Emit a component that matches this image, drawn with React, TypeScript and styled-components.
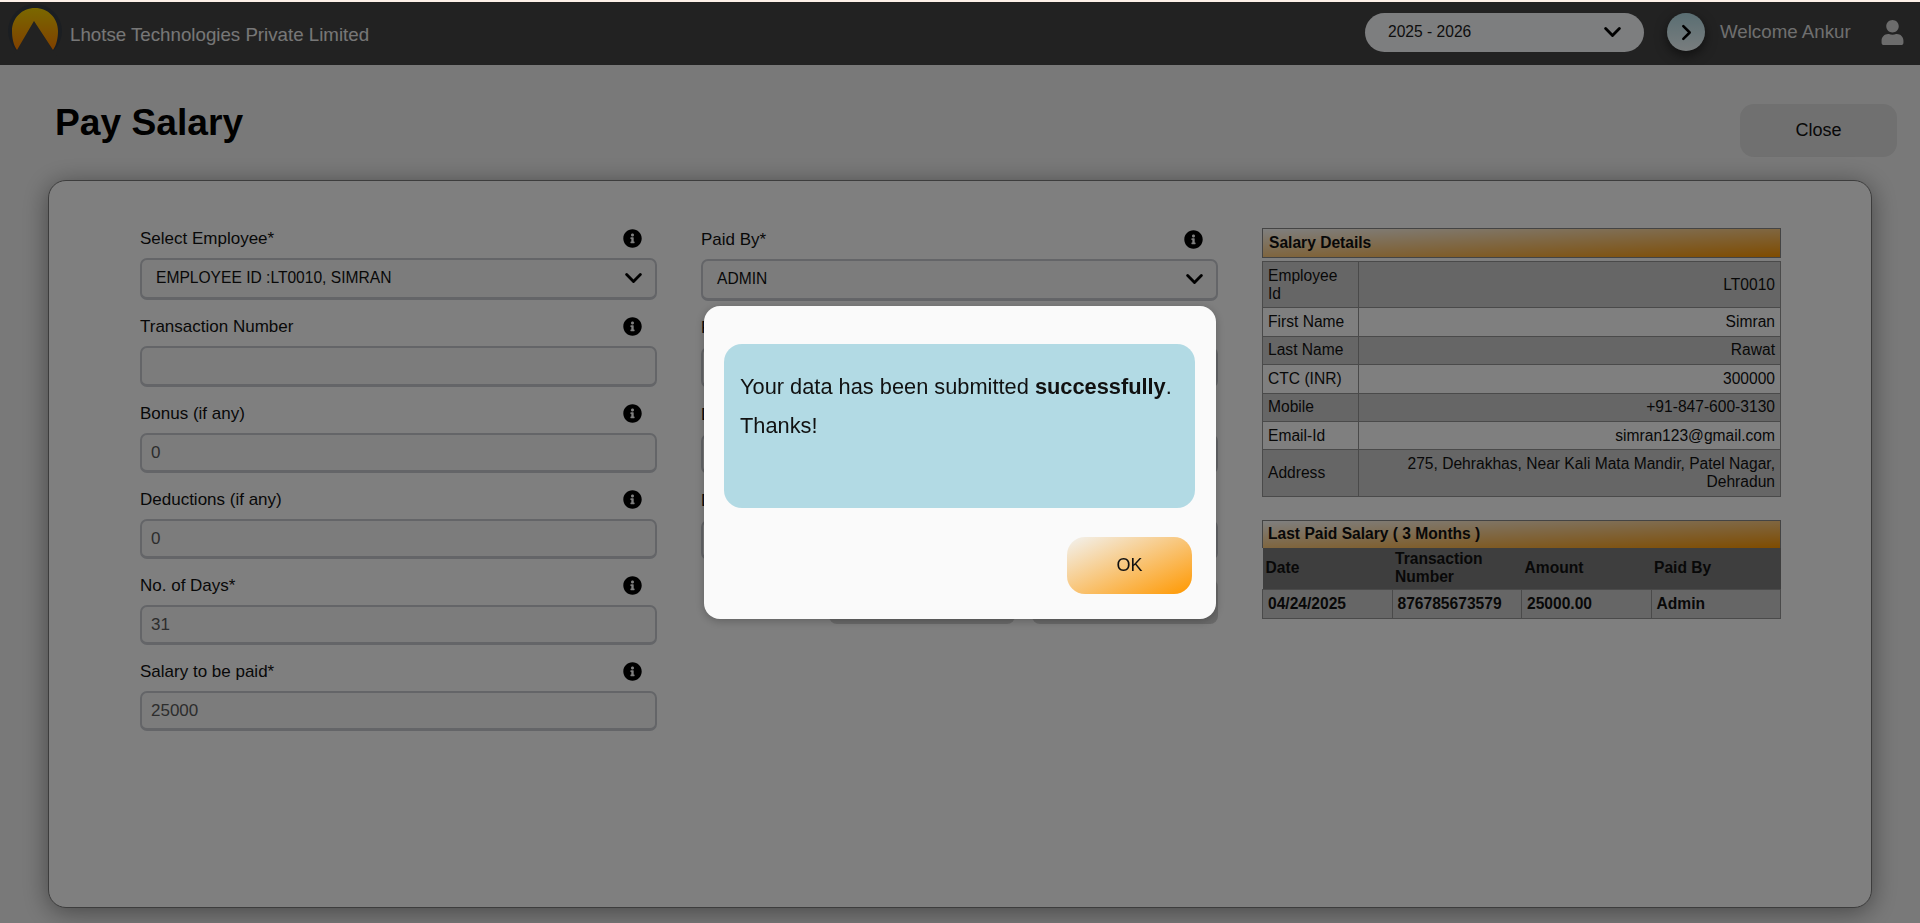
import React from 'react';
import styled, { createGlobalStyle } from 'styled-components';
import { FaInfoCircle, FaUser } from 'react-icons/fa';

const Global = createGlobalStyle`
  html, body { margin: 0; padding: 0; height: 100%; background: #fdf0e8; overflow: hidden; }
  body { font-family: "Liberation Sans", Arial, sans-serif; color: #000; }
  * { box-sizing: border-box; }
`;

const Shell = styled.div`
  padding-top: 2px;
  height: 923px;
  display: flex;
  flex-direction: column;
`;

const Header = styled.header`
  height: 63px;
  flex: none;
  background: #444;
  display: flex;
  align-items: center;
  padding: 0 15px 0 8px;
`;

const LogoMark = styled.svg`
  width: 54px;
  height: 54px;
  flex: none;
  margin-top: -6px;
`;

const Company = styled.div`
  margin-left: 8px;
  font-size: 18.72px;
  color: #eee;
  flex: 1;
  padding-top: 2px;
`;

const YearSelect = styled.div`
  width: 279px;
  height: 39px;
  margin-top: -3px;
  border-radius: 20px;
  background: #fafcff;
  display: flex;
  align-items: center;
  justify-content: space-between;
  padding: 0 23px 0 23px;
  font-size: 15.6px;
  color: #1a1a1a;
`;

const Toggle = styled.div`
  width: 38px;
  height: 38px;
  margin: -3px 15px 0 23px;
  border-radius: 50%;
  background: linear-gradient(180deg, #b4dde6, #f2fbfd);
  box-shadow: 0 4px 12px rgba(0, 0, 0, 0.55);
  display: flex;
  align-items: center;
  justify-content: center;
  flex: none;
`;

const Welcome = styled.div`
  font-size: 18.72px;
  color: #dedede;
  margin-top: -3px;
  width: 160px;
`;

const UserIcon = styled(FaUser)`
  color: #d8d8d8;
  font-size: 25px;
  margin-top: -2px;
  flex: none;
`;

const Main = styled.main`
  flex: 1;
  background: #f3f3f3;
  padding: 39px 23px 15px 48px;
  display: flex;
  flex-direction: column;
  min-height: 0;
`;

const TitleRow = styled.div`
  height: 76px;
  flex: none;
  display: flex;
  justify-content: space-between;
  align-items: flex-start;
  padding-left: 7px;
`;

const Title = styled.h1`
  margin: 0;
  font-size: 37.2px;
  font-weight: 700;
  line-height: 36px;
`;

const CloseButton = styled.button`
  width: 157px;
  height: 53px;
  border: none;
  border-radius: 14px;
  background: #e0e0e0;
  font: 18px "Liberation Sans", Arial, sans-serif;
  color: #111;
`;

const Card = styled.section`
  flex: 1;
  width: 1824px;
  background: #fff;
  border: 1px solid #7a7a7a;
  border-radius: 18px;
  box-shadow: 0 4px 26px rgba(0, 0, 0, 0.42);
  padding: 46px 90px 0 91px;
  display: grid;
  grid-template-columns: 517px 517px 519px;
  column-gap: 44px;
  align-items: start;
`;

const Column = styled.div<{ $offset?: number }>`
  display: flex;
  flex-direction: column;
  padding-top: ${(p) => p.$offset ?? 0}px;
`;

const Field = styled.div`
  margin-bottom: 15px;
`;

const LabelRow = styled.div`
  height: 24px;
  margin-bottom: 7px;
  display: flex;
  align-items: center;
  justify-content: space-between;
  padding-right: 15px;
`;

const Label = styled.label`
  font-size: 17px;
  color: #111;
`;

const InfoIcon = styled(FaInfoCircle)`
  font-size: 19px;
  color: #000;
  flex: none;
  margin-top: -2px;
`;

const SelectBox = styled.div`
  height: 42px;
  border: 2px solid #c8cbd0;
  border-bottom-width: 3px;
  border-radius: 7px;
  display: flex;
  align-items: center;
  justify-content: space-between;
  padding: 0 13px 1px 14px;
  font-size: 15.6px;
  color: #111;
  background: #f8f8f8;
`;

const Input = styled.input<{ $h: number }>`
  display: block;
  width: 100%;
  height: ${(p) => p.$h}px;
  border: 2px solid #c8cbd0;
  border-bottom-width: 3px;
  border-radius: 7px;
  padding: 0 9px;
  font: 17px "Liberation Sans", Arial, sans-serif;
  color: #5a5a5a;
  background: #f8f8f8;
  outline: none;
`;

const ButtonRow = styled.div`
  display: flex;
  justify-content: flex-end;
  gap: 17px;
  margin-top: 4px;
`;

const FormButton = styled.button`
  width: 186px;
  height: 45px;
  border: none;
  border-radius: 8px;
  background: #d4d4d4;
  font: 16px "Liberation Sans", Arial, sans-serif;
`;

const BarTitle = styled.div<{ $h: number; $pad: number; $space: string }>`
  height: ${(p) => p.$h}px;
  border: 1px solid #888;
  border-bottom-width: ${(p) => (p.$space === '0' ? 0 : 1)}px;
  margin-bottom: ${(p) => p.$space};
  padding-left: ${(p) => p.$pad}px;
  display: flex;
  align-items: center;
  font-size: 15.6px;
  font-weight: 700;
  color: #111;
  background: linear-gradient(to bottom right, #fff, #ff9800);
`;

const SideColumn = styled.div`
  display: flex;
  flex-direction: column;
  margin-top: 1px;
`;

const DetailTable = styled.table`
  width: 100%;
  border-collapse: collapse;
  font-size: 15.6px;
  line-height: 18px;
  color: #111;
  margin-bottom: 23px;
  table-layout: fixed;
  td {
    border: 1px solid #949494;
    padding: 4.7px 5px;
  }
  td:first-child { width: 96px; }
  td:last-child { text-align: right; }
  tr:nth-child(odd) { background: #cdcdcd; }
  tr:nth-child(even) { background: #fff; }
`;

const PaidTable = styled.table`
  width: 100%;
  border-collapse: collapse;
  table-layout: fixed;
  font-size: 15.6px;
  font-weight: 700;
  line-height: 18px;
  color: #111;
  th {
    background: #7c7c7c;
    text-align: left;
    font-weight: 700;
    padding: 2px 3px;
    height: 42px;
  }
  td {
    background: #cdcdcd;
    border: 1px solid #949494;
    padding: 4px 5px;
    height: 29px;
  }
`;

const Overlay = styled.div`
  position: fixed;
  inset: 2px 0 0 0;
  background: rgba(0, 0, 0, 0.5);
  display: flex;
  align-items: center;
  justify-content: center;
`;

const Modal = styled.div`
  width: 512px;
  height: 313px;
  background: #fafafa;
  border-radius: 16px;
  padding: 38px 21px 0 20px;
  box-shadow: 0 2px 10px rgba(0, 0, 0, 0.25);
  display: flex;
  flex-direction: column;
`;

const Message = styled.div`
  height: 164px;
  border-radius: 18px;
  background: #b2dae4;
  padding: 31px 16px 0;
  font-size: 21.8px;
  color: #111;
  p { margin: 0 0 15px; line-height: 24px; }
`;

const OkRow = styled.div`
  display: flex;
  justify-content: flex-end;
  margin-top: 29px;
  padding-right: 3px;
`;

const OkButton = styled.button`
  width: 125px;
  height: 57px;
  border: none;
  border-radius: 18px;
  background: linear-gradient(to bottom right, #f2f2f0, #ff9800);
  font: 18px "Liberation Sans", Arial, sans-serif;
  color: #111;
`;

const Chevron = ({ size = 17 }: { size?: number }) => (
  <svg width={size} height={size * 0.62} viewBox="0 0 16 10" fill="none" stroke="#000" strokeWidth="2.7" strokeLinecap="round" strokeLinejoin="round">
    <path d="M1.5 1.5 L8 8 L14.5 1.5" />
  </svg>
);

const details: [string, string][] = [
  ['Employee Id', 'LT0010'],
  ['First Name', 'Simran'],
  ['Last Name', 'Rawat'],
  ['CTC (INR)', '300000'],
  ['Mobile', '+91-847-600-3130'],
  ['Email-Id', 'simran123@gmail.com'],
  ['Address', '275, Dehrakhas, Near Kali Mata Mandir, Patel Nagar, Dehradun'],
];

const FieldHead = ({ text }: { text: string }) => (
  <LabelRow>
    <Label>{text}</Label>
    <InfoIcon />
  </LabelRow>
);

export default function App() {
  return (
    <>
      <Global />
      <Shell>
        <Header>
          <LogoMark viewBox="0 0 54 54">
            <defs>
              <linearGradient id="dome" x1="0" y1="0" x2="0" y2="1">
                <stop offset="0" stopColor="#f5d000" />
                <stop offset="1" stopColor="#ff8000" />
              </linearGradient>
            </defs>
            <circle cx="27" cy="27" r="27" fill="#363c44" />
            <path d="M26 17 L4 54 H50 Z" fill="#444" />
            <path d="M9 46 C5.5 41 4 34 4 27 C4 14 14 4 27 4 C40 4 50 14 50 27 C50 34 48.5 41 45 46 L26 17 Z" fill="url(#dome)" />
          </LogoMark>
          <Company>Lhotse Technologies Private Limited</Company>
          <YearSelect>
            2025 - 2026
            <Chevron />
          </YearSelect>
          <Toggle>
            <svg width="11" height="17" viewBox="0 0 10 16" fill="none" stroke="#000" strokeWidth="2.4" strokeLinecap="round" strokeLinejoin="round">
              <path d="M2 2 L8 8 L2 14" />
            </svg>
          </Toggle>
          <Welcome>Welcome Ankur</Welcome>
          <UserIcon />
        </Header>
        <Main>
          <TitleRow>
            <Title>Pay Salary</Title>
            <CloseButton>Close</CloseButton>
          </TitleRow>
          <Card>
            <Column>
              <Field>
                <FieldHead text="Select Employee*" />
                <SelectBox>
                  EMPLOYEE ID :LT0010, SIMRAN
                  <Chevron />
                </SelectBox>
              </Field>
              <Field>
                <FieldHead text="Transaction Number" />
                <Input $h={41} readOnly value="" />
              </Field>
              <Field>
                <FieldHead text="Bonus (if any)" />
                <Input $h={40} readOnly value="0" />
              </Field>
              <Field>
                <FieldHead text="Deductions (if any)" />
                <Input $h={40} readOnly value="0" />
              </Field>
              <Field>
                <FieldHead text="No. of Days*" />
                <Input $h={40} readOnly value="31" />
              </Field>
              <Field>
                <FieldHead text="Salary to be paid*" />
                <Input $h={40} readOnly value="25000" />
              </Field>
            </Column>
            <Column $offset={1}>
              <Field>
                <FieldHead text="Paid By*" />
                <SelectBox>
                  ADMIN
                  <Chevron />
                </SelectBox>
              </Field>
              <Field>
                <FieldHead text="Payment Mode" />
                <Input $h={41} readOnly value="" />
              </Field>
              <Field>
                <FieldHead text="Date" />
                <Input $h={40} readOnly value="" />
              </Field>
              <Field>
                <FieldHead text="Description" />
                <Input $h={40} readOnly value="" />
              </Field>
              <ButtonRow>
                <FormButton>Reset</FormButton>
                <FormButton>Submit</FormButton>
              </ButtonRow>
            </Column>
            <SideColumn>
              <BarTitle $h={30} $pad={6} $space="3px">Salary Details</BarTitle>
              <DetailTable>
                <tbody>
                  {details.map(([k, v]) => (
                    <tr key={k}>
                      <td>{k}</td>
                      <td>{v}</td>
                    </tr>
                  ))}
                </tbody>
              </DetailTable>
              <BarTitle $h={28} $pad={5} $space="0">Last Paid Salary ( 3 Months )</BarTitle>
              <PaidTable>
                <thead>
                  <tr>
                    <th>Date</th>
                    <th>Transaction Number</th>
                    <th>Amount</th>
                    <th>Paid By</th>
                  </tr>
                </thead>
                <tbody>
                  <tr>
                    <td>04/24/2025</td>
                    <td>876785673579</td>
                    <td>25000.00</td>
                    <td>Admin</td>
                  </tr>
                </tbody>
              </PaidTable>
            </SideColumn>
          </Card>
        </Main>
      </Shell>
      <Overlay>
        <Modal>
          <Message>
            <p>Your data has been submitted <b>successfully</b>.</p>
            <p>Thanks!</p>
          </Message>
          <OkRow>
            <OkButton>OK</OkButton>
          </OkRow>
        </Modal>
      </Overlay>
    </>
  );
}
